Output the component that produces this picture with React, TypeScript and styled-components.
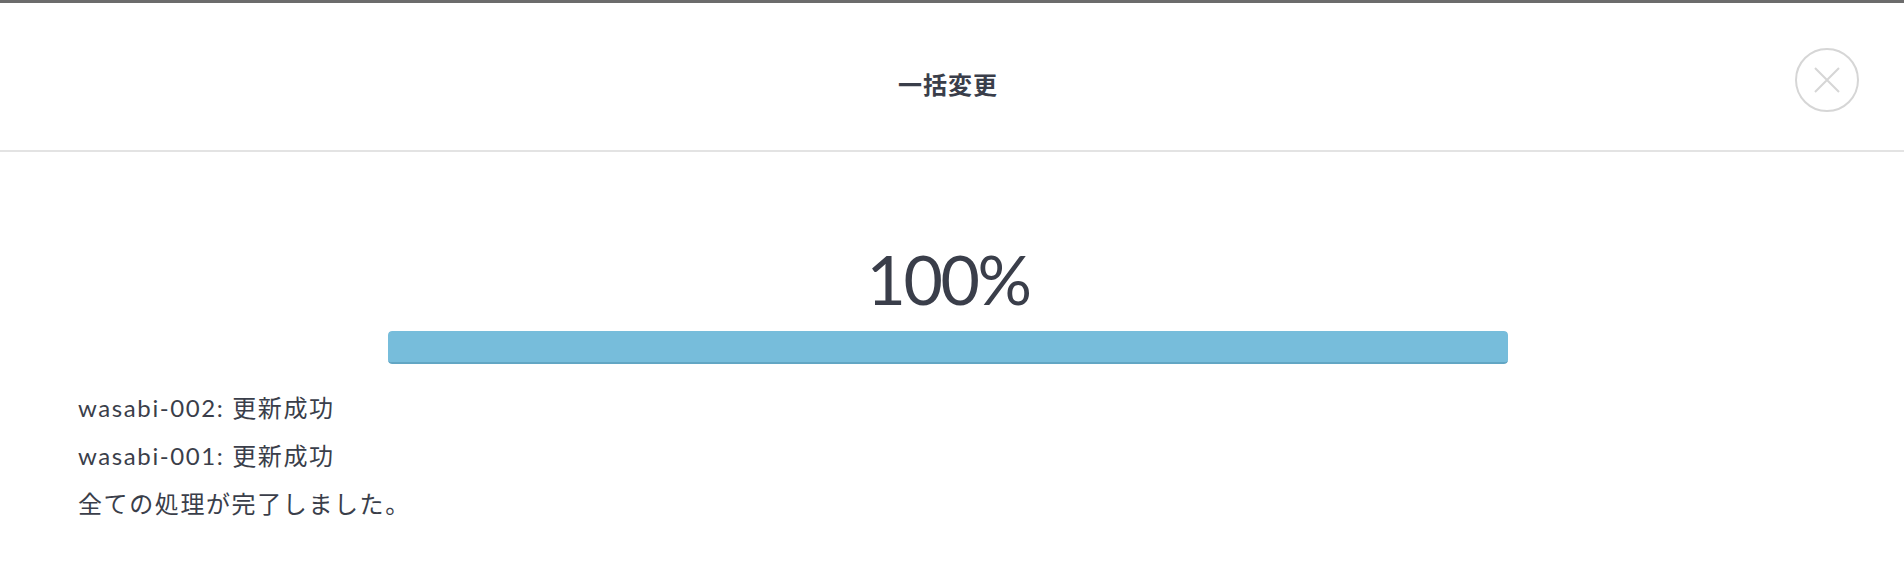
import styled, { createGlobalStyle } from "styled-components";

const GlobalStyle = createGlobalStyle`
	html, body {
		margin: 0;
		padding: 0;
		background: #ffffff;
	}
	body {
		font-family: Lato, "Noto Sans CJK JP", sans-serif;
		color: #3a3e4a;
	}
`;

const Modal = styled.div`
	width: 1904px;
	height: 588px;
	border-top: 3px solid #6c6c6c;
	box-sizing: border-box;
	background: #fff;
`;

const Header = styled.header`
	position: relative;
	display: flex;
	align-items: center;
	justify-content: center;
	height: 147px;
	padding-right: 8px;
	border-bottom: 2px solid #e3e3e3;
`;

const Title = styled.h2`
	margin: 14px 0 0;
	font-size: 24px;
	font-weight: 700;
	color: #3a3e4a;
	letter-spacing: 1px;
`;

const CloseButton = styled.button`
	position: absolute;
	right: 45px;
	top: 45px;
	width: 64px;
	height: 64px;
	padding: 0;
	border: none;
	background: transparent;
	cursor: pointer;

	svg {
		display: block;
	}
`;

const Body = styled.main`
	padding: 93px 8px 0 0;
`;

const ProgressBlock = styled.section`
	display: flex;
	flex-direction: column;
	align-items: center;
`;

const Percent = styled.div`
	font-size: 68px;
	line-height: 68px;
	font-weight: 400;
	letter-spacing: -2.5px;
	color: #3a3e4a;
`;

const Track = styled.div`
	width: 1120px;
	height: 33px;
	margin-top: 18px;
	border-radius: 4px;
	background: #eef2f4;
	overflow: hidden;
`;

const Fill = styled.div`
	height: 100%;
	background: #77bddb;
	border-bottom: 2px solid #62a6c4;
	box-sizing: border-box;
	border-radius: 4px;
`;

const Log = styled.div`
	padding: 20px 0 0 78px;
`;

const LogLine = styled.p`
	margin: 0;
	font-size: 24px;
	line-height: 48px;
	letter-spacing: 1.6px;
	color: #3a3e4a;
`;

const logs = ["wasabi-002: 更新成功", "wasabi-001: 更新成功", "全ての処理が完了しました。"];

export default function App() {
	const progress = 100;

	return (
		<>
			<GlobalStyle />
			<Modal>
				<Header>
					<Title>一括変更</Title>
					<CloseButton aria-label="閉じる">
						<svg width="64" height="64" viewBox="0 0 64 64" fill="none">
							<circle cx="32" cy="32" r="31" stroke="#d6d6d6" strokeWidth="2" />
							<path d="M20 20 L44 44 M44 20 L20 44" stroke="#d6d6d6" strokeWidth="2" />
						</svg>
					</CloseButton>
				</Header>
				<Body>
					<ProgressBlock>
						<Percent>{progress}%</Percent>
						<Track>
							<Fill style={{ width: `${progress}%` }} />
						</Track>
					</ProgressBlock>
					<Log>
						{logs.map((line) => (
							<LogLine key={line}>{line}</LogLine>
						))}
					</Log>
				</Body>
			</Modal>
		</>
	);
}
